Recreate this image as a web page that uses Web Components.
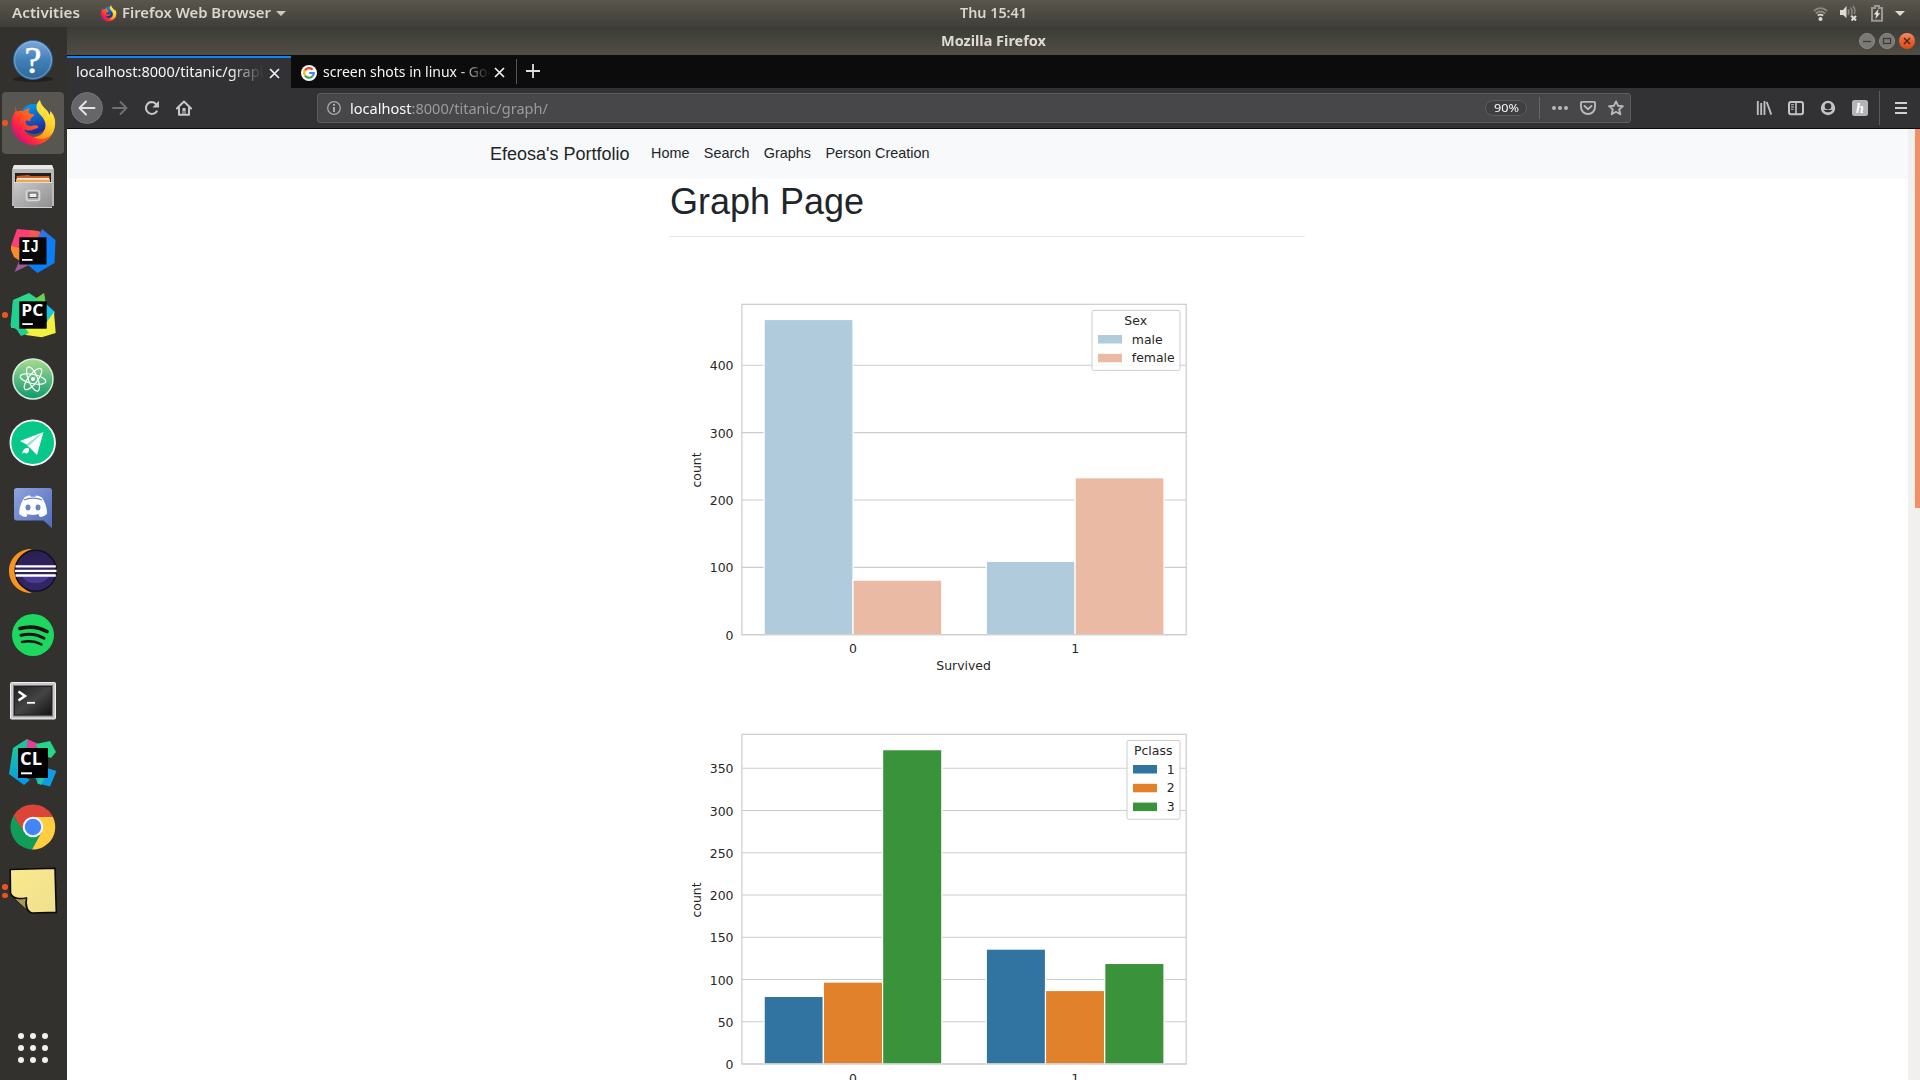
<!DOCTYPE html>
<html lang="en">
<head>
<meta charset="utf-8">
<title>Mozilla Firefox</title>
<style>
html,body{margin:0;height:100%;overflow:hidden;background:#fff}
body{font-family:"Noto Sans","Open Sans",sans-serif}
</style>
</head>
<body>
<ubuntu-desktop></ubuntu-desktop>
<script>
const define = (name, html, setup) => {
  const t = document.createElement('template');
  t.innerHTML = html;
  customElements.define(name, class extends HTMLElement {
    connectedCallback() {
      if (this.shadowRoot) return;
      this.attachShadow({ mode: 'open' }).append(t.content.cloneNode(true));
      if (setup) setup.call(this, this.shadowRoot);
    }
  });
};

/* Label whose glyph run is stretched to an exact width. */
define('fit-label', `<style>
:host{display:block;white-space:nowrap;flex:none;line-height:20px}
span{display:inline-block;transform-origin:0 50%}</style><span><slot></slot></span>`, function (r) {
  const w = +this.getAttribute('w'), s = r.querySelector('span');
  const nat = s.getBoundingClientRect().width;
  this.style.width = w + 'px';
  if (nat) s.style.transform = `scaleX(${w / nat})`;
});

const FOX = `<defs><linearGradient id="b" x1="0" y1="0" x2=".3" y2="1"><stop offset="0" stop-color="#00a4f5"/><stop offset="1" stop-color="#202b9a"/></linearGradient>
<linearGradient id="r" x1=".9" y1=".2" x2=".1" y2=".9"><stop offset="0" stop-color="#ff9a1c"/><stop offset=".45" stop-color="#ff5a20"/><stop offset=".75" stop-color="#ff1e4b"/><stop offset="1" stop-color="#b5128a"/></linearGradient>
<linearGradient id="y" x1=".6" y1="0" x2=".2" y2="1"><stop offset="0" stop-color="#fff44f"/><stop offset=".5" stop-color="#ffd02c"/><stop offset="1" stop-color="#ff8a16"/></linearGradient></defs>
<circle cx="25" cy="20" r="15" fill="url(#b)"/>
<path d="M6.500 7c-.5 2-.3 3.500.2 4.800C3 17 1.500 24 3.500 31c3 9.500 12 15.200 21.500 15 11-.2 20-8.500 20.800-19.500C40 34 37 39 28 38.500c-7 0-12-4-12.500-8.500 2.500 2 6.500 2 9 .5 2-1.200 3.500-1 4.500-1.800.8-.7-.5-3-3.500-2.500-3 .8-5 1.500-7.500-.2-1.500-1-1.800-2.500-1.200-4 1-1 3 0 4.500.2.300-1.500-.2-2.200.8-3.200 1.500-1.400 3-2 3.300-3.500-2-.5-4.800-.3-5.900-2 0-2 .5-3.200 1.700-4.500-3 .3-5 1.600-6.700 3.300-2.500-.7-5-.7-6.200.5C7.300 11 6.500 9 6.500 7z" fill="url(#r)"/>
<path d="M31 1c-4 3.500-4.500 8-2 12 2.500 3.500 7.500 7 7.500 13 0 6.500-5 12-12 12 8 4.500 18 1 20.500-7C48 22 45 15 41 12c.3 2 0 3-.5 4C39 10 32 8 31 1z" fill="url(#y)"/>`;

const sq = (a, b, t) => `<rect x="${a}" y="${a}" width="${b}" height="${b}" fill="#050505"/><text x="${a + 2}" y="24.500" font-family="Open Sans" font-weight="700" font-size="15.500" fill="#fff" textLength="22" lengthAdjust="spacingAndGlyphs">${t}</text><rect x="${a + 3}" y="${a + b - 5.500}" width="10.500" height="1.800" fill="#fff"/>`;

const ICONS = {
help: `<defs><linearGradient id="h" x1="0" y1="0" x2="0" y2="1"><stop offset="0" stop-color="#7fa9dc"/><stop offset=".5" stop-color="#4080b8"/><stop offset="1" stop-color="#2d6796"/></linearGradient></defs><ellipse cx="24" cy="44" rx="20" ry="3" fill="#22211d"/><circle cx="24" cy="25" r="19.500" fill="url(#h)" stroke="#2c679b"/><circle cx="24" cy="25" r="18.400" fill="none" stroke="#9dc0e6" stroke-opacity=".6"/><text x="24" y="37.500" text-anchor="middle" font-family="Liberation Serif" font-size="38" fill="#fff" stroke="#fff" stroke-width=".6">?</text>`,
firefox: FOX,
files: `<defs><linearGradient id="f" x1="0" y1="0" x2="1" y2="1"><stop offset="0" stop-color="#c9c9c9"/><stop offset="1" stop-color="#8f8f8f"/></linearGradient></defs><path d="M5 2h38l2 5v36H3V7z" fill="#b9b9b9"/><path d="M5 2h38l1.500 4h-41z" fill="#e8e8e8"/><rect x="6" y="10" width="36" height="10" fill="#202020"/><path d="M7.500 19v-6l12-1 2 1h19v6z" fill="#cc5f24"/><path d="M7 21v-5h34v5z" fill="#efa653"/><path d="M8 15.800h32" stroke="#fff" stroke-width="1.400"/><path d="M5 19h38v26H5z" fill="url(#f)"/><path d="M5 19.500h38" stroke="#ddd"/><path d="M5 44.500h38" stroke="#d0d0d0"/><rect x="17.500" y="27.500" width="13" height="10" rx="2" fill="#aaa" stroke="#d8d8d8" stroke-width="1.600"/><rect x="20" y="30" width="8" height="4.500" fill="#eee" stroke="#555"/>`,
ij: `<defs><linearGradient id="i" x1="0" y1="0" x2="1" y2="1"><stop offset="0" stop-color="#6b5dd8"/><stop offset=".6" stop-color="#0a7ff5"/></linearGradient></defs><path d="M2 19v4l3 7 6 4V17z" fill="#f98b2a"/><path d="M11 32L5.500 45 20 38z" fill="#a05a9c"/><path d="M8 2l22 2 4 6-20 12-12-3z" fill="#fd3f75"/><path d="M21 3l10 2-2 7-9-1z" fill="#ef5a4c"/><path d="M33 2l13.500 11-1 23-17 10-11-9 12-28z" fill="url(#i)"/><rect x="10.300" y="10.300" width="27.200" height="27.200" fill="#080808"/><text x="12.500" y="25.300" font-family="Liberation Mono" font-weight="700" font-size="18" fill="#fff" textLength="17.500" lengthAdjust="spacingAndGlyphs">IJ</text><rect x="13" y="32" width="10.500" height="1.800" fill="#fff"/>`,
pc: `<path d="M4 9l16-7 9 6 6-6 2 11-23 24-12 0z" fill="#2ed58c"/><path d="M1.500 35L4 9l8 2v30z" fill="#22d090"/><path d="M26 8l9-6 1 10z" fill="#67d24a"/><path d="M36 12l10 9-8 14z" fill="#17c5e8"/><path d="M45 21l1.700 21-14 4.300L17 44l-5-7 25-5z" fill="#f4f03e"/><path d="M6 36l10 1 4 5-8 3z" fill="#25cf8d"/>` + sq(10.3, 27.4, 'PC'),
atom: `<defs><linearGradient id="a" x1="0" y1="0" x2="0" y2="1"><stop offset="0" stop-color="#a8dc90"/><stop offset="1" stop-color="#0c9b6d"/></linearGradient></defs><circle cx="24" cy="24" r="20" fill="url(#a)" stroke="#d9efdd" stroke-width="1.500"/><g fill="none" stroke="#fff" stroke-width="1.200"><ellipse cx="24" cy="24" rx="13" ry="4.600" transform="rotate(12 24 24)"/><ellipse cx="24" cy="24" rx="13" ry="4.600" transform="rotate(68 24 24)"/><ellipse cx="24" cy="24" rx="13" ry="4.600" transform="rotate(-52 24 24)"/></g><circle cx="24" cy="24" r="2" fill="#fff"/>`,
send: `<circle cx="23.700" cy="23.700" r="22.300" fill="#07c789" stroke="#fff" stroke-width="1.800"/><path d="M34.500 13L11 22l6.500 3.500z" fill="#fff"/><path d="M34.500 13L17.500 25.500l2 3z" fill="#9ae8cf"/><path d="M34.500 13L19.500 27.500 28 36z" fill="#fff"/><path d="M20 29.500c-3-1.500-6 .5-7 5 1.500-.7 2-1 3-.7 0 .7.500 1 1.500.7 1.500-.6 3-2 2.500-5z" fill="#fff"/>`,
discord: `<defs><linearGradient id="d" x1="0" y1="0" x2="1" y2="1"><stop offset="0" stop-color="#8fa4dc"/><stop offset="1" stop-color="#4e6bbd"/></linearGradient></defs><path d="M7.500 5h33c1.700 0 2.500 1 2.500 2.500v37.800L34.500 37.500h-27C6 37.500 5 36.500 5 35V7.500C5 6 6 5 7.500 5z" fill="url(#d)"/><path d="M15.500 14.500c2-1.500 4-2 5.500-2l.8 1.200h4.600l.8-1.200c1.500 0 3.700.7 5.700 2 3.500 5 5.300 11 5 16.500-2.300 2-4.500 2.700-7 3l-1.500-2.500c1-.4 1.500-.7 2.300-1.300-5 2.300-10.300 2.300-15.300 0 .8.600 1.300.9 2.300 1.300L17.200 34c-2.500-.3-4.700-1-7-3-.3-5.500 1.800-11.500 5.300-16.500z" fill="#fff"/><ellipse cx="19" cy="24.500" rx="2.500" ry="3" fill="#6b82cb"/><ellipse cx="29" cy="24.500" rx="2.500" ry="3" fill="#6b82cb"/><path d="M15 17c5-2.500 13-2.500 18 0" fill="none" stroke="#6b82cb" stroke-width="1.200"/>`,
eclipse: `<defs><linearGradient id="e" x1="0" y1="0" x2="0" y2="1"><stop offset="0" stop-color="#2b214f"/><stop offset="1" stop-color="#34256a"/></linearGradient></defs><path d="M23 2C10 1.500 0 11.500 0 24s10 22.500 23 22C14 43 8 34 8 24S14 5 23 2z" fill="#f7941e"/><circle cx="26.700" cy="23.700" r="20.500" fill="url(#e)" stroke="#120e26" stroke-width="1.500"/><path d="M12.500 28.500a15 12 0 0028 0z" fill="#4b3a92"/><path d="M6.500 19.300h40.300M6 23.900h41.500M6.500 28.500h40.300" stroke="#fff" stroke-width="2.300"/>`,
spotify: `<circle cx="24" cy="24" r="21" fill="#1ed760"/><g fill="none" stroke="#191414" stroke-linecap="round"><path d="M11 17.500c9-2.500 19-1.500 27 3" stroke-width="3.700"/><path d="M12 24.300c7.500-2 16-1.200 23 3" stroke-width="3"/><path d="M13 31c7-1.600 13.500-.9 19.500 2.500" stroke-width="2.500"/></g>`,
terminal: `<defs><linearGradient id="t" x1="0" y1="0" x2="1" y2="1"><stop offset="0" stop-color="#222"/><stop offset=".5" stop-color="#444"/><stop offset="1" stop-color="#151515"/></linearGradient></defs><rect x="1.500" y="7.500" width="45" height="36.500" rx="1" fill="#c9c9c9" stroke="#f0f0f0"/><rect x="4.500" y="10.500" width="39" height="30.500" fill="#222" stroke="#777"/><rect x="6" y="12" width="36" height="27.500" fill="url(#t)"/><path d="M9.500 16.500l6.500 4.500-6.500 4.500" fill="none" stroke="#fff" stroke-width="2.500"/><path d="M18 27.800h8" stroke="#fff" stroke-width="1.800"/>`,
cl: `<defs><linearGradient id="c" x1="0" y1="0" x2=".2" y2="1"><stop offset="0" stop-color="#20d585"/><stop offset="1" stop-color="#0898e8"/></linearGradient></defs><path d="M4 9l14-9 3 9-5 29 5 3-6 5L0 35z" fill="url(#c)"/><path d="M18 0l14 6-9 5-5-1z" fill="#de4496"/><path d="M27 5l14-3 6 11-5 6-13-4z" fill="#22d68a"/><path d="M38 29l9.500 3-6.500 15.500-12-3-3-6z" fill="#0b9ee5"/><path d="M38 34l-6 12-4-2 2-8z" fill="#20c7a0"/><rect x="9" y="9" width="30" height="30" fill="#000"/><text x="11" y="25.800" font-family="Open Sans" font-weight="700" font-size="17" fill="#fff" textLength="22" lengthAdjust="spacingAndGlyphs">CL</text><rect x="12" y="33.300" width="11" height="2" fill="#fff"/>`,
chrome: `<path d="M4.510 12.750A22.500 22.500 0 0143.490 12.750L44 14H24L14.500 29.500z" fill="#db4437"/><path d="M4.510 12.750A22.500 22.500 0 0023 46.500L33 29 24 33 15.300 29z" fill="#109d58"/><path d="M43.900 14A22.500 22.500 0 0123 46.500L32.700 29 33 24 24 14z" fill="#ffcd40"/><circle cx="24" cy="24" r="10.300" fill="#f4f4f4"/><circle cx="24" cy="24" r="8.200" fill="#4285f4"/>`,
note: `<defs><linearGradient id="n" x1="0" y1="0" x2="1" y2="1"><stop offset="0" stop-color="#fbe98e"/><stop offset="1" stop-color="#efe08e"/></linearGradient></defs><path d="M1.200 2.500L46 1.200l1.300 44.200-24 .6C18.500 45 16 38.500 17.500 31 10 32.500 3 31 1.500 26z" fill="url(#n)" stroke="#0b0b06" stroke-width="1.600" stroke-linejoin="round"/><path d="M4.500 31c4 1.300 9 1.200 13 0-1.700 5-1 10 1.500 13z" fill="#a69b53" stroke="#0b0b06" stroke-width=".8"/>`
};

define('app-icon', `<style>:host{display:block;flex:none;width:var(--s,48px);height:var(--s,48px)}svg{display:block;width:100%;height:100%;overflow:visible}</style><svg viewBox="0 0 48 48"></svg>`, function (r) {
  r.querySelector('svg').innerHTML = ICONS[this.getAttribute('name')];
});

define('dock-item', `<style>
:host{display:flex;height:64px;align-items:center;position:relative;flex:none}
.tile{box-sizing:border-box;width:62px;height:62px;margin-left:2px;padding:7px;border-radius:4px;display:flex}
:host([active]) .tile{background:#575651}
.dots{position:absolute;left:2px;top:0;height:64px;display:flex;flex-direction:column;justify-content:center;gap:3px}
i{width:5.500px;height:5.500px;border-radius:50%;background:#e95420}
</style><div class="tile"><app-icon></app-icon></div><div class="dots"></div>`, function (r) {
  r.querySelector('app-icon').replaceWith(Object.assign(document.createElement('template'), { innerHTML: `<app-icon name="${this.getAttribute('icon')}"></app-icon>` }).content);
  r.querySelector('.dots').innerHTML = '<i></i>'.repeat(+this.getAttribute('windows') || 0);
});

define('app-dock', `<style>
:host{display:flex;flex-direction:column;width:67px;background:#33312d;flex:none}
.all{display:grid;grid-template-columns:repeat(3,6px);gap:6px;margin:auto 0 17px 18px}
.all i{width:6px;height:6px;border-radius:50%;background:#f2f1ef}
</style>
<dock-item icon="help"></dock-item><dock-item icon="firefox" windows="1" active></dock-item><dock-item icon="files"></dock-item><dock-item icon="ij"></dock-item><dock-item icon="pc" windows="1"></dock-item><dock-item icon="atom"></dock-item><dock-item icon="send"></dock-item><dock-item icon="discord"></dock-item><dock-item icon="eclipse"></dock-item><dock-item icon="spotify"></dock-item><dock-item icon="terminal"></dock-item><dock-item icon="cl"></dock-item><dock-item icon="chrome"></dock-item><dock-item icon="note" windows="2"></dock-item>
<div class="all"><i></i><i></i><i></i><i></i><i></i><i></i><i></i><i></i><i></i></div>`);

define('top-panel', `<style>
:host{display:grid;grid-template-columns:1fr auto 1fr;height:27px;align-items:center;background:linear-gradient(#5a564d,#3f3e39);color:#dad7d0;font-size:14px;font-weight:600;flex:none}
.l,.r{display:flex;align-items:center}.l{padding-left:12px}.r{justify-content:flex-end;padding:0 15px 1px 0}
app-icon{--s:17px;margin:0 5px 1px 20px}svg{display:block;flex:none}
.l svg{margin-left:5px}
fit-label{margin-bottom:1px}
.clock{margin-left:67px}
</style>
<div class="l"><fit-label w="68">Activities</fit-label><app-icon name="firefox"></app-icon><fit-label w="149">Firefox Web Browser</fit-label><svg width="10" height="5"><path d="M0 0h10L5 5z" fill="#ccc9c2"/></svg></div>
<fit-label class="clock" w="67">Thu 15:41</fit-label>
<div class="r">
<svg width="15" height="16" style="margin-right:12px"><g fill="none" stroke-width="1.800"><path d="M.8 6.200c4-4 9.400-4 13.400 0" stroke="#8a8781"/><path d="M2.800 8.500c3-2.500 6.400-2.500 9.400 0" stroke="#8a8781"/><path d="M4.800 10.500c2-1.300 3.400-1.300 5.400 0" stroke="#dedbd5"/></g><circle cx="7.500" cy="14" r="2" fill="#dedbd5"/></svg>
<svg width="17" height="16" style="margin-right:14px"><path d="M0 5h3l3.500-4v12L3 10H0z" fill="#dedbd5"/><g fill="none" stroke="#8a8781" stroke-width="1.500"><path d="M8 4.500c1 1.500 1 4 0 5.500M10.500 2.500c2 3 2 6.500 0 9.500M13 1c2.200 3 2.200 6 1.200 8"/></g><path d="M11.500 11l4.500 4.500m0-4.500l-4.500 4.500" stroke="#dedbd5" stroke-width="2"/></svg>
<svg width="12" height="17" style="margin-right:12px"><path d="M1 3h3V1h4v2h3v12.800H1z" fill="none" stroke="#9b9892" stroke-width="2"/><path d="M7.500 4L2.800 9.500h2.400L4.400 14l4.800-5.800H6.800z" fill="#e5e2dc"/></svg>
<svg width="10" height="5"><path d="M0 0h10L5 5z" fill="#dedbd5"/></svg></div>`);

define('title-bar', `<style>
:host{display:grid;grid-template-columns:1fr auto 1fr;align-items:center;height:28px;background:linear-gradient(#3b3c37,#504d45);color:#dfdbd2;font-size:14px;font-weight:700;flex:none}
.b{grid-column:3;display:flex;gap:4px;justify-content:flex-end;padding-right:5px}
fit-label{grid-column:2;margin:0 0 1px -1px}
svg{display:block}
</style><fit-label w="105">Mozilla Firefox</fit-label><div class="b">
<svg width="16" height="17"><circle cx="8" cy="8" r="7.600" fill="#7b7973" stroke="#96938c" stroke-width=".8"/><path d="M4 8.500h8" stroke="#3c3b37" stroke-width="1.200"/></svg>
<svg width="16" height="17"><circle cx="8" cy="8" r="7.600" fill="#7b7973" stroke="#96938c" stroke-width=".8"/><rect x="4.500" y="5.500" width="7" height="5" fill="none" stroke="#3c3b37" stroke-width="1.200"/></svg>
<svg width="16" height="17"><defs><linearGradient id="x" x1="0" y1="0" x2="0" y2="1"><stop offset="0" stop-color="#f2906b"/><stop offset=".5" stop-color="#e9602f"/><stop offset="1" stop-color="#d94c18"/></linearGradient></defs><circle cx="8" cy="8" r="8" fill="url(#x)"/><path d="M5 5l6 6m0-6l-6 6" stroke="#4a2414" stroke-width="1.400"/></svg></div>`);

define('browser-tab', `<style>
:host{display:flex;box-sizing:border-box;align-items:center;height:33px;background:#0c0c0d;color:#f5f5f5;font-size:14px;padding-top:2px}
:host([active]){background:#323234;border-top:2px solid #0a84ff;padding-top:0;margin-top:1px;height:32px}
.t{overflow:hidden;flex:none;width:var(--tw);padding-bottom:2px;-webkit-mask:linear-gradient(90deg,#000 calc(100% - 32px),transparent);mask:linear-gradient(90deg,#000 calc(100% - 32px),transparent)}
svg{margin-left:auto;margin-right:var(--xr,11.500px);display:block;flex:none}
</style><slot name="icon"></slot><div class="t"><slot></slot></div><svg width="11" height="11"><path d="M1 1l9 9m0-9l-9 9" stroke="#f0f0f0" stroke-width="1.700"/></svg>`);

define('tab-strip', `<style>
:host{display:flex;height:33px;background:#0c0c0d;flex:none;align-items:center}
.g{margin:0 6px 0 10px;display:block;flex:none}
.sep{width:1px;height:25px;background:#55555a}
</style>
<browser-tab active style="width:224px;padding-left:9px;--tw:187px;box-sizing:border-box"><fit-label w="198">localhost:8000/titanic/graph/</fit-label></browser-tab>
<browser-tab style="width:225px;--tw:167px"><svg slot="icon" class="g" width="16" height="16" viewBox="0 0 16 16"><circle cx="8" cy="8" r="8" fill="#fff"/><g fill="none" stroke-width="2.200"><path d="M11.600 4.700A4.800 4.800 0 004 5.400" stroke="#ea4335"/><path d="M4 5.400a4.800 4.800 0 000 5.200" stroke="#fbbc05"/><path d="M4 10.600a4.800 4.800 0 007.200.9" stroke="#34a853"/><path d="M11.200 11.500A4.800 4.800 0 0012.800 8H8.200" stroke="#4285f4"/></g></svg><fit-label w="193">screen shots in linux - Google</fit-label></browser-tab>
<span class="sep"></span>
<svg width="34" height="33"><path d="M9 16h14M16 9v14" stroke="#dededf" stroke-width="1.800"/></svg>`);

define('url-bar', `<style>
:host{display:flex;box-sizing:border-box;align-items:center;width:1314px;height:30px;background:#474749;border:1px solid #5c5c5f;border-radius:3px;color:#9b9b9e;font-size:14px;padding:0 6px 0 9px}
b{font-weight:400;color:#f9f9fa}svg{display:block;flex:none}
.info{margin-right:9px}
.addr{padding-top:1px}
.zoom{margin-left:auto;width:42px;height:16px;box-sizing:border-box;border:1px solid #5c5c5f;border-radius:8px;background:#3f3f42;color:#f9f9fa;font-size:11px;display:flex;align-items:center;justify-content:center}
.sep{width:1px;height:22px;background:#67676b;margin:0 12px}
</style>
<svg class="info" width="14" height="14"><circle cx="7" cy="7" r="6.300" fill="none" stroke="#a9a9ac" stroke-width="1.300"/><path d="M7 6v5" stroke="#b5b5b7" stroke-width="1.800"/><circle cx="7" cy="3.800" r="1.100" fill="#b5b5b7"/></svg>
<fit-label class="addr" w="198"><b>localhost</b>:8000/titanic/graph/</fit-label>
<span class="zoom"><fit-label w="25">90%</fit-label></span><span class="sep"></span>
<svg width="16" height="16"><g fill="#b9b9bb"><circle cx="2" cy="8" r="2"/><circle cx="8" cy="8" r="2"/><circle cx="14" cy="8" r="2"/></g></svg>
<svg width="16" height="16" style="margin:0 12px"><path d="M2 1.900h12c.6 0 1 .4 1 1V7c0 4-3 7-7 7s-7-3-7-7V2.900c0-.6.4-1 1-1z" fill="none" stroke="#b9b9bb" stroke-width="1.900"/><path d="M4.500 6L8 9.200 11.500 6" fill="none" stroke="#b9b9bb" stroke-width="1.900" stroke-linecap="round"/></svg>
<svg width="16" height="16"><path d="M8 1.400l2 4.300 4.800.5-3.600 3.200 1.100 4.900L8 11.800l-4.300 2.500 1.100-4.900L1.200 6.200 6 5.700z" fill="none" stroke="#b9b9bb" stroke-width="1.900" stroke-linejoin="round"/></svg>`);

define('nav-toolbar', `<style>
:host{display:flex;align-items:center;box-sizing:border-box;height:41px;background:#323234;border-bottom:1px solid #0c0c0d;padding-left:4px;flex:none}
svg{display:block;flex:none}
url-bar{margin-left:125px}
.right{display:flex;align-items:center;gap:16px;margin-left:auto;padding-right:13px}
.sep{width:1px;height:34px;background:#5a5a5e;margin:0 -1px 0 -5px}
</style>
<svg width="32" height="32"><circle cx="16" cy="16" r="15.500" fill="#666668" stroke="#7b7b7d" stroke-width=".8"/><path d="M23.500 16H9M15 9.500L8.500 16l6.500 6.500" fill="none" stroke="#e2e2e3" stroke-width="2" stroke-linecap="round" stroke-linejoin="round"/></svg>
<svg width="16" height="16" style="margin-left:9px"><path d="M1 8h13.500M8.500 2l6 6-6 6" fill="none" stroke="#717174" stroke-width="1.800" stroke-linecap="round" stroke-linejoin="round"/></svg>
<svg width="16" height="16" style="margin-left:16px"><path d="M13.200 10.600A5.900 5.900 0 117.500 2.100c2 0 3.800 1 4.800 2.500" fill="none" stroke="#c8c8c9" stroke-width="2"/><path d="M15 .8v6.600H8.400z" fill="#c8c8c9"/></svg>
<svg width="16" height="16" style="margin-left:16px"><path d="M.9 8.500L8 1.500l7.100 7M3 7.500v7.200h10V7.500" fill="none" stroke="#c8c8c9" stroke-width="2" stroke-linejoin="round" stroke-linecap="round"/><path d="M6.500 8h3v7h-1V11h-1v4h-1z" fill="#c8c8c9"/></svg>
<url-bar></url-bar>
<div class="right">
<svg width="16" height="16"><path d="M1.800 1v14M5.200 3v12M8.500 1v14M10.700 2l4.600 12.600" fill="none" stroke="#bcbcbe" stroke-width="1.900"/></svg>
<svg width="16" height="16"><rect x="1" y="2" width="14" height="12.200" rx="2" fill="none" stroke="#c4c4c6" stroke-width="2"/><path d="M8 2v12" stroke="#c4c4c6" stroke-width="1.600"/><path d="M3 4.700h3M3 7h3M3 9.300h2.500" stroke="#c4c4c6" stroke-width="1.100"/></svg>
<svg width="16" height="16"><circle cx="8" cy="8" r="7.200" fill="#c4c4c6"/><circle cx="8" cy="6.300" r="3.300" fill="#323234"/><path d="M3.500 9.500c1.500 3.800 7.500 3.800 9 0-1 .8-8 .8-9 0z" fill="#323234"/></svg>
<svg width="16" height="16"><rect width="16" height="16" rx="2.500" fill="#b5b5b7"/><text x="8" y="12.500" text-anchor="middle" font-family="Liberation Serif" font-style="italic" font-weight="700" font-size="14" fill="#fff">h</text></svg>
<span class="sep"></span>
<svg width="12" height="14"><path d="M0 2h12M0 7h12M0 12h12" stroke="#d0d0d1" stroke-width="1.900"/></svg>
</div>`);

/* Grouped count plot. Coordinates are in the figure's 574 x 430 canvas. */
define('count-plot', `<style>:host{display:block;width:574px;height:430px}svg{display:block;overflow:visible}text{font-family:"DejaVu Sans",sans-serif;font-size:12.440px;fill:#262626}</style><svg width="574" height="430"></svg>`, function (r) {
  const a = n => this.getAttribute(n), series = JSON.parse(a('series')), step = +a('step'), unit = +a('unit'), lx = +a('legend-x');
  const L = 71.9, R = 516.2, T = 51.3, B = +a('base'), half = (R - L) / 2, bw = half * .8 / series.length;
  let s = '';
  for (let v = 0; B - v * unit > T; v += step) {
    const y = B - v * unit;
    s += `<path d="M${L} ${y}H${R}" stroke="#ccc" stroke-width="1.100"/><text x="63.500" y="${y + 5}" text-anchor="end">${v}</text>`;
  }
  series.forEach((d, i) => d.v.forEach((v, g) => {
    s += `<rect x="${L + half * g + half * .1 + bw * i}" y="${B - v * unit}" width="${bw}" height="${v * unit}" fill="${d.c}" stroke="#fff" stroke-width="1.200"/>`;
  }));
  s += `<rect x="${L}" y="${T}" width="${R - L}" height="${B - T}" fill="none" stroke="#ccc" stroke-width="1.200"/>`;
  s += [0, 1].map(g => `<text x="${L + half * (g + .5)}" y="${B + 18.5}" text-anchor="middle">${g}</text>`).join('');
  if (a('x-label')) s += `<text x="${(L + R) / 2 - .5}" y="${B + 35.6}" text-anchor="middle">${a('x-label')}</text>`;
  s += `<text transform="translate(31.300 217) rotate(-90)" text-anchor="middle">count</text>`;
  s += `<rect x="${lx}" y="57.400" width="${510 - lx}" height="${22.2 + 18.9 * series.length}" rx="2" fill="#fff" fill-opacity=".8" stroke="#ccc"/><text x="${(lx + 510) / 2 - .3}" y="71.600" text-anchor="middle">${a('legend')}</text>`;
  series.forEach((d, i) => {
    const y = 82 + 18.8 * i;
    s += `<rect x="${lx + 6}" y="${y}" width="24" height="8.500" fill="${d.c}"/><text x="${lx + 39.8}" y="${y + 8.5}">${d.n}</text>`;
  });
  r.querySelector('svg').innerHTML = s;
});

define('site-nav', `<style>
:host{display:flex;box-sizing:border-box;height:50px;background:#f8f9fa;padding-left:423px;color:#212529;font-size:14.400px;line-height:22px;align-items:flex-start}
.brand{font-size:18px;margin:14px 14.400px 0 0}a{padding:13px 7.200px 0}
</style><span class="brand">Efeosa's Portfolio</span><a>Home</a><a>Search</a><a>Graphs</a><a>Person Creation</a>`);

define('graph-page', `<style>
:host{display:block;flex:1;background:#fff;font-family:"Liberation Sans",Arial,sans-serif;color:#212529;overflow:hidden}
main{margin-left:603px;width:635px}
h1{font-size:36px;font-weight:400;line-height:43px;margin:0;padding-top:1px}
hr{border:0;border-top:1px solid #e5e5e5;margin:13px 0 16px}
</style><site-nav></site-nav><main><h1>Graph Page</h1><hr>
<count-plot legend="Sex" x-label="Survived" legend-x="422" base="381.700" unit=".6735" step="100" series='[{"n":"male","c":"#afcbdc","v":[468,109]},{"n":"female","c":"#ebbaa5","v":[81,233]}]'></count-plot>
<count-plot legend="Pclass" legend-x="457" base="381" unit=".845" step="50" series='[{"n":"1","c":"#3174a1","v":[80,136]},{"n":"2","c":"#e1812c","v":[97,87]},{"n":"3","c":"#3a923a","v":[372,119]}]'></count-plot>
</main>`);

define('scroll-bar', `<style>:host{display:flex;justify-content:flex-end;width:12px;background:#f1f0ee;flex:none}i{width:5px;height:379px;background:#f08f68}</style><i></i>`);

define('browser-window', `<style>
:host{display:flex;flex-direction:column;flex:1;min-width:0}
.view{display:flex;flex:1;min-height:0}
</style><title-bar></title-bar><tab-strip></tab-strip><nav-toolbar></nav-toolbar><div class="view"><graph-page></graph-page><scroll-bar></scroll-bar></div>`);

define('ubuntu-desktop', `<style>
:host{display:flex;flex-direction:column;width:1920px;height:1080px;overflow:hidden}
.w{display:flex;flex:1;min-height:0}
</style><top-panel></top-panel><div class="w"><app-dock></app-dock><browser-window></browser-window></div>`);
</script>
</body>
</html>
